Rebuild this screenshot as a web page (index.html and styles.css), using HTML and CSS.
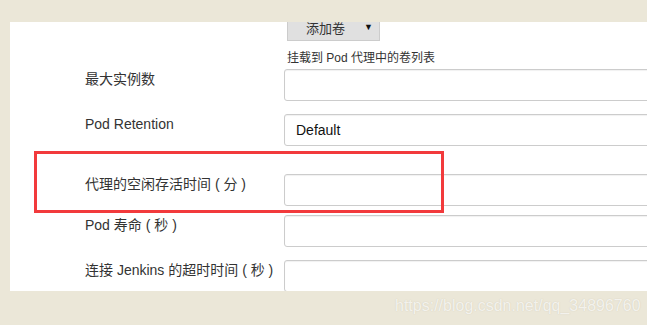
FILE: index.html
```html
<!DOCTYPE html>
<html lang="zh">
<head>
    <meta charset="UTF-8">
    <meta name="viewport" content="width=device-width, initial-scale=1.0">
    <title>Kubernetes Pod 模板</title>
    <link rel="stylesheet" href="styles.css">
</head>
<body>
    <div class="panel">
        <div class="volumes">
            <button class="add-btn">添加卷 <span class="caret">&#9660;</span></button>
            <div class="help">挂载到 Pod 代理中的卷列表</div>
        </div>
        <div class="row row-first">
            <label class="label">最大实例数</label>
            <input class="field" type="text">
        </div>
        <div class="row">
            <label class="label">Pod Retention</label>
            <div class="field select">Default</div>
        </div>
        <div class="row row-wide">
            <label class="label">代理的空闲存活时间 ( 分 )</label>
            <input class="field" type="text">
        </div>
        <div class="row row-tight">
            <label class="label">Pod 寿命 ( 秒 )</label>
            <input class="field" type="text">
        </div>
        <div class="row">
            <label class="label">连接 Jenkins 的超时时间 ( 秒 )</label>
            <input class="field" type="text">
        </div>
    </div>
    <div class="highlight"></div>
    <div class="watermark">https://blog.csdn.net/qq_34896760</div>
</body>
</html>
```

FILE: styles.css
```css
:root {
    --page-bg: #ebe7d8;
    --panel-bg: #ffffff;
    --text-color: #333333;
    --border-color: #cccccc;
    --button-bg: #e0e0e0;
    --mark-color: #f23a3c;
}
html, body {
    margin: 0;
    height: 100%;
    overflow: hidden;
}
body {
    background: var(--page-bg);
    font-family: "Liberation Sans", "Noto Sans CJK SC", sans-serif;
    color: var(--text-color);
    position: relative;
}
.panel {
    margin: 22px 0 0 10px;
    width: 720px;
    height: 269px;
    background: var(--panel-bg);
    overflow: hidden;
}
.volumes {
    padding-left: 277px;
}
.add-btn {
    display: flex;
    align-items: center;
    margin-top: -14px;
    width: 93px;
    height: 33px;
    padding: 6px 0 0 18px;
    background: var(--button-bg);
    border: 1px solid var(--border-color);
    border-top: none;
    color: var(--text-color);
    font-family: "Liberation Sans", "Noto Sans CJK SC", sans-serif;
    font-size: 13px;
}
.caret {
    font-size: 9px;
    margin-left: 19px;
    color: #111;
}
.help {
    margin-top: 9px;
    font-size: 12px;
    line-height: 16px;
}
.row {
    display: flex;
    align-items: flex-start;
    margin-top: 13px;
}
.row-first {
    margin-top: 3px;
}
.row-wide {
    margin-top: 28px;
}
.row-tight {
    margin-top: 9px;
}
.label {
    width: 199px;
    padding-left: 75px;
    font-size: 14px;
    line-height: 20px;
    white-space: nowrap;
}
.field {
    box-sizing: border-box;
    width: 400px;
    height: 32px;
    margin: 0;
    border: 1px solid var(--border-color);
    border-radius: 3px;
    box-shadow: inset 0 1px 1px rgba(0, 0, 0, 0.06);
    background: #fff;
}
.select {
    display: flex;
    align-items: center;
    padding-left: 11px;
    font-size: 14px;
    color: #111;
}
.highlight {
    position: absolute;
    left: 34px;
    top: 151px;
    width: 410px;
    height: 62px;
    box-sizing: border-box;
    border: 3px solid var(--mark-color);
}
.watermark {
    position: absolute;
    left: 395px;
    top: 296px;
    font-family: "Liberation Sans", sans-serif;
    font-size: 16px;
    line-height: 20px;
    color: rgba(255, 255, 255, 0.75);
    text-shadow: 0 0 1px rgba(150, 140, 110, 0.35);
}
```
